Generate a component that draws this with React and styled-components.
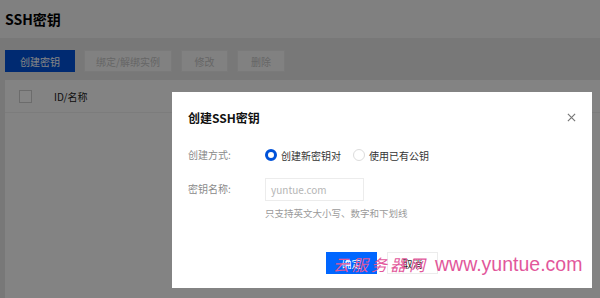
import styled, { createGlobalStyle } from 'styled-components';

const GlobalStyle = createGlobalStyle`
  html, body {
    margin: 0;
    padding: 0;
    width: 600px;
    height: 298px;
    overflow: hidden;
  }
  body {
    font-family: "Noto Sans CJK SC", "Liberation Sans", sans-serif;
    background: #ebebeb;
  }
`;

const Page = styled.div`
  position: relative;
  width: 600px;
  height: 298px;
  background: #e6e6e6;
  overflow: hidden;
`;

const Header = styled.div`
  height: 38px;
  background: #f6f6f6;
  display: flex;
  align-items: center;
  padding-left: 5px;
  font-size: 14px;
  font-weight: 700;
  color: #000;
`;

const Toolbar = styled.div`
  display: flex;
  gap: 9px;
  padding: 12px 5px 8px;
`;

const ToolButton = styled.div`
  height: 22px;
  width: ${({ $w }) => $w}px;
  display: flex;
  align-items: center;
  justify-content: center;
  font-size: 10px;
  box-sizing: border-box;
  background: ${({ $primary }) => ($primary ? '#0052d9' : '#f8f8f8')};
  color: ${({ $primary }) => ($primary ? '#fff' : '#c4c4c4')};
  border: 1px solid ${({ $primary }) => ($primary ? '#0052d9' : '#eaeaea')};
`;

const Table = styled.div`
  margin-left: 5px;
  height: 300px;
  background: #fbfbfb;
`;

const TableHead = styled.div`
  height: 32px;
  display: flex;
  align-items: center;
  padding-left: 14px;
  gap: 22px;
  border-bottom: 1px solid #eeeeee;
  font-size: 10px;
  color: #222;
`;

const Check = styled.span`
  width: 11px;
  height: 11px;
  border: 1px solid #d0d0d0;
  background: #fff;
`;

const Mask = styled.div`
  position: absolute;
  inset: 0;
  background: rgba(0, 0, 0, 0.48);
`;

const Dialog = styled.div`
  position: absolute;
  left: 172px;
  top: 92px;
  width: 420px;
  height: 196px;
  background: #fff;
  box-sizing: border-box;
  padding: 17px 16px 0;
  display: flex;
  flex-direction: column;
`;

const DialogHead = styled.div`
  display: flex;
  justify-content: space-between;
  align-items: center;
  height: 16px;
`;

const DialogTitle = styled.div`
  font-size: 12px;
  font-weight: 700;
  color: #111;
`;

const Close = styled.div`
  width: 14px;
  height: 14px;
  display: flex;
  align-items: center;
  justify-content: center;
  margin-right: -2px;
`;

const Form = styled.div`
  display: flex;
  flex-direction: column;
  margin-top: 19px;
  gap: 12px;
`;

const Row = styled.div`
  display: flex;
  align-items: ${({ $top }) => ($top ? 'flex-start' : 'center')};
`;

const Label = styled.div`
  width: 77px;
  font-size: 10px;
  color: #8a8a8a;
  line-height: 22px;
  flex-shrink: 0;
`;

const RadioGroup = styled.div`
  display: flex;
  gap: 12px;
  height: 22px;
  align-items: center;
`;

const RadioItem = styled.label`
  display: flex;
  align-items: center;
  gap: 4px;
  font-size: 10px;
  color: #333;
`;

const RadioDot = styled.span`
  width: 12px;
  height: 12px;
  border-radius: 50%;
  box-sizing: border-box;
  border: ${({ $on }) => ($on ? '3px solid #0052d9' : '1px solid #dcdcdc')};
  background: #fff;
`;

const Field = styled.div`
  display: flex;
  flex-direction: column;
  gap: 5px;
`;

const Input = styled.div`
  width: 99px;
  height: 23px;
  box-sizing: border-box;
  border: 1px solid #ececec;
  padding-left: 5px;
  display: flex;
  align-items: center;
  font-size: 10px;
  color: #b5b5b5;
`;

const Hint = styled.div`
  font-size: 9.5px;
  color: #9a9a9a;
`;

const Footer = styled.div`
  margin-top: auto;
  margin-bottom: 14px;
  display: flex;
  gap: 10px;
  padding-left: 138px;
`;

const DlgButton = styled.div`
  width: 51px;
  height: 22px;
  box-sizing: border-box;
  display: flex;
  align-items: center;
  justify-content: center;
  font-size: 10px;
  background: ${({ $primary }) => ($primary ? '#0066ff' : '#fff')};
  color: ${({ $primary }) => ($primary ? '#fff' : '#222')};
  border: 1px solid ${({ $primary }) => ($primary ? '#0066ff' : '#ececec')};
`;

const Watermark = styled.div`
  position: absolute;
  left: 333px;
  top: 252px;
  display: flex;
  align-items: baseline;
  color: #e2579b;
  white-space: nowrap;
`;

const WmCn = styled.span`
  font-family: "Noto Sans CJK SC", sans-serif;
  font-size: 16px;
  letter-spacing: 3px;
  font-style: italic;
  margin-right: 7px;
`;

const WmUrl = styled.span`
  font-family: "Liberation Sans", sans-serif;
  font-size: 19.5px;
`;

export default function App() {
  return (
    <>
      <GlobalStyle />
      <Page>
        <Header>SSH密钥</Header>
        <Toolbar>
          <ToolButton $primary $w={70}>创建密钥</ToolButton>
          <ToolButton $w={88}>绑定/解绑实例</ToolButton>
          <ToolButton $w={47}>修改</ToolButton>
          <ToolButton $w={48}>删除</ToolButton>
        </Toolbar>
        <Table>
          <TableHead>
            <Check />
            <span>ID/名称</span>
          </TableHead>
        </Table>
        <Mask />
        <Dialog>
          <DialogHead>
            <DialogTitle>创建SSH密钥</DialogTitle>
            <Close>
              <svg width="9" height="9" viewBox="0 0 10 10">
                <path d="M1 1L9 9M9 1L1 9" stroke="#777" strokeWidth="1.3" />
              </svg>
            </Close>
          </DialogHead>
          <Form>
            <Row>
              <Label>创建方式:</Label>
              <RadioGroup>
                <RadioItem>
                  <RadioDot $on />
                  创建新密钥对
                </RadioItem>
                <RadioItem>
                  <RadioDot />
                  使用已有公钥
                </RadioItem>
              </RadioGroup>
            </Row>
            <Row $top>
              <Label>密钥名称:</Label>
              <Field>
                <Input>yuntue.com</Input>
                <Hint>只支持英文大小写、数字和下划线</Hint>
              </Field>
            </Row>
          </Form>
          <Footer>
            <DlgButton $primary>确定</DlgButton>
            <DlgButton>取消</DlgButton>
          </Footer>
        </Dialog>
        <Watermark>
          <WmCn>云服务器网</WmCn>
          <WmUrl>www.yuntue.com</WmUrl>
        </Watermark>
      </Page>
    </>
  );
}
